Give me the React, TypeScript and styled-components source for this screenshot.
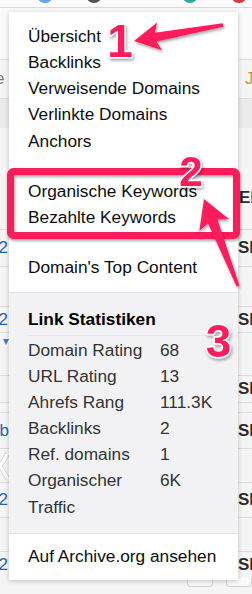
import React from "react";
import styled, { createGlobalStyle } from "styled-components";

const Global = createGlobalStyle`
  html, body { margin: 0; padding: 0; background: #f5f5f5; }
  body { width: 252px; height: 594px; overflow: hidden; font-family: "Liberation Sans", Arial, sans-serif; }
`;

const PINK = "#fd1a5c";

const Page = styled.div`
  position: relative;
  width: 252px;
  height: 594px;
  overflow: hidden;
  background: #f5f5f5;
`;

const Toolbar = styled.div`
  height: 8px;
  box-sizing: border-box;
  border-bottom: 1px solid #d8d8d8;
  background: #fbfbfb;
  display: flex;
  align-items: flex-start;
  overflow: hidden;
`;

const ToolIcon = styled.span<{ $color: string; $ml: number; $ring?: boolean }>`
  flex: none;
  width: 16px;
  height: 16px;
  margin-top: -13px;
  margin-left: ${(p) => p.$ml}px;
  border-radius: 50%;
  box-sizing: border-box;
  background: ${(p) => (p.$ring ? "transparent" : p.$color)};
  border: ${(p) => (p.$ring ? `3px solid ${p.$color}` : "none")};
`;

const Table = styled.div`
  display: flex;
  flex-direction: column;
`;

const Strip = styled.div<{ $h: number; $bg?: string; $border?: boolean }>`
  height: ${(p) => p.$h}px;
  box-sizing: border-box;
  background: ${(p) => p.$bg || "transparent"};
  border-bottom: ${(p) => (p.$border ? "1px solid #dcdcdc" : "none")};
  display: grid;
  grid-template-columns: 1fr 14px;
  align-items: center;
  font-size: 17px;
`;

const LeftCell = styled.div<{ $shift: number; $tone: "blue" | "gray" }>`
  margin-left: ${(p) => p.$shift}px;
  white-space: nowrap;
  color: ${(p) => (p.$tone === "blue" ? "#2565b3" : "#7a7a7a")};
  line-height: 20px;
`;

const RightCell = styled.div<{ $pad?: number; $tone: "bold" | "gold" }>`
  padding-left: ${(p) => p.$pad || 0}px;
  white-space: nowrap;
  line-height: 20px;
  font-weight: ${(p) => (p.$tone === "bold" ? 700 : 400)};
  color: ${(p) => (p.$tone === "bold" ? "#2b2b2b" : "#c7932f")};
`;

const BlueCaret = styled.span`
  display: block;
  width: 0;
  height: 0;
  margin-left: 3px;
  border-left: 3px solid transparent;
  border-right: 3px solid transparent;
  border-top: 6px solid #4a78c2;
`;

const Chevron = styled.svg`
  display: block;
  width: 10px;
  height: 28px;
`;

const ButtonRow = styled.div`
  display: flex;
  align-items: flex-start;
  height: 16px;
  padding-left: 187px;
  gap: 13px;
`;

const GhostButton = styled.span<{ $w: number }>`
  width: ${(p) => p.$w}px;
  height: 9px;
  box-sizing: border-box;
  border: 1px solid #cfcfcf;
  border-top: none;
  border-radius: 0 0 4px 4px;
  background: #fafafa;
`;

const Menu = styled.div`
  position: absolute;
  top: 12px;
  left: 9px;
  width: 229px;
  height: 568px;
  box-sizing: border-box;
  background: #ffffff;
  box-shadow: 0 1px 5px rgba(0, 0, 0, 0.22);
  padding: 10.7px 0 0;
  font-family: "Liberation Sans", Arial, sans-serif;
  font-size: 17.3px;
`;

const Item = styled.div<{ $gapTop?: number }>`
  height: 26.25px;
  line-height: 26.25px;
  padding: 0 19px;
  margin-top: ${(p) => p.$gapTop || 0}px;
  color: #0d0d0d;
  white-space: nowrap;
`;

const Stats = styled.div`
  margin-top: 11.15px;
  border-top: 1px solid #e4e4e8;
  border-bottom: 1px solid #e4e4e8;
  background: #f2f2f5;
  padding: 13.3px 19px 13.3px;
`;

const StatsTitle = styled.div`
  height: 26px;
  line-height: 26px;
  font-weight: 700;
  color: #000;
  padding-bottom: 3.5px;
  border-bottom: 1px solid #e6e6ea;
`;

const StatsGrid = styled.div`
  display: grid;
  grid-template-columns: 132px 1fr;
  line-height: 26.1px;
  color: #333333;
  padding-top: 0.5px;
`;

const StatLabel = styled.div``;
const StatValue = styled.div``;

const Overlay = styled.svg`
  position: absolute;
  left: 0;
  top: 0;
  width: 252px;
  height: 594px;
  pointer-events: none;
`;

const NumText = styled.text`
  font-family: "Liberation Sans", Arial, sans-serif;
  font-weight: 700;
  fill: ${PINK};
  stroke: #ffffff;
  stroke-width: 3px;
  paint-order: stroke;
  stroke-linejoin: round;
`;

type StripDef = {
  h: number;
  bg?: string;
  border?: boolean;
  left?: React.ReactNode;
  leftShift?: number;
  leftTone?: "blue" | "gray";
  right?: string;
  rightTone?: "bold" | "gold";
  rightPad?: number;
};

const strips: StripDef[] = [
  { h: 52, bg: "#fafafa", border: true },
  { h: 39, border: true, left: "e", leftShift: -5, leftTone: "gray", right: "J", rightTone: "gold", rightPad: 7 },
  { h: 29, bg: "#ebebeb" },
  { h: 52 },
  { h: 36, right: "El", rightTone: "bold", rightPad: 1 },
  { h: 14, border: true },
  { h: 37, border: true, left: "72", leftShift: -11, leftTone: "blue", right: "SE", rightTone: "bold" },
  { h: 40, border: true },
  { h: 26, border: true, left: "72", leftShift: -11, leftTone: "blue", right: "SE", rightTone: "bold" },
  { h: 17, left: <BlueCaret />, leftShift: 0, leftTone: "blue" },
  { h: 26, border: true },
  { h: 27, border: true, right: "SE", rightTone: "bold" },
  { h: 10, border: true },
  { h: 36, border: true, left: "eb", leftShift: -10, leftTone: "blue", right: "SE", rightTone: "bold" },
  {
    h: 34,
    border: true,
    left: (
      <Chevron viewBox="0 0 10 28">
        <polyline points="9,1 1,14 9,27" fill="none" stroke="#d8d8d8" strokeWidth="5" strokeLinejoin="round" />
        <polyline points="9,1 1,14 9,27" fill="none" stroke="#ffffff" strokeWidth="3" strokeLinejoin="round" />
      </Chevron>
    ),
    leftShift: -1,
    leftTone: "gray",
  },
  { h: 35, border: true, left: "72", leftShift: -11, leftTone: "blue", right: "SE", rightTone: "bold" },
  { h: 34, border: true },
  { h: 26, left: "72", leftShift: -11, leftTone: "blue", right: "SE", rightTone: "bold" },
];

const menuGroupOne = ["Übersicht", "Backlinks", "Verweisende Domains", "Verlinkte Domains", "Anchors"];
const stats: [string, string][] = [
  ["Domain Rating", "68"],
  ["URL Rating", "13"],
  ["Ahrefs Rang", "111.3K"],
  ["Backlinks", "2"],
  ["Ref. domains", "1"],
  ["Organischer Traffic", "6K"],
];

function Annotations() {
  return (
    <Overlay viewBox="0 0 252 594">
      <defs>
        <filter id="sh" x="-20%" y="-20%" width="140%" height="140%">
          <feDropShadow dx="1" dy="2" stdDeviation="1.4" floodColor="#000" floodOpacity="0.35" />
        </filter>
      </defs>
      <rect x="10.5" y="171.5" width="226" height="64" rx="3" fill="none" stroke={PINK} strokeWidth="7" filter="url(#sh)" />
      <polygon
        points="134,41 157.1,22.6 154.9,32.7 222.7,23.2 223.3,26.8 156.5,41.5 162.1,50.2"
        fill={PINK}
        filter="url(#sh)"
      />
      <polygon
        points="204,199 229.1,219.3 217.4,219.6 239.4,285.5 236.6,286.5 208,223.2 199.3,230.9"
        fill={PINK}
        filter="url(#sh)"
      />
      <NumText x="120" y="57" fontSize="46" textAnchor="middle" filter="url(#sh)">1</NumText>
      <NumText x="191" y="186" fontSize="42" textAnchor="middle" filter="url(#sh)">2</NumText>
      <NumText x="218.5" y="357" fontSize="46" textAnchor="middle" filter="url(#sh)">3</NumText>
    </Overlay>
  );
}

export default function App() {
  return (
    <Page>
      <Global />
      <Toolbar>
        <ToolIcon $color="#333" $ml={-14} />
        <ToolIcon $color="#5fa3e8" $ml={35} />
        <ToolIcon $color="#555" $ml={33} />
        <ToolIcon $color="#2fa7a0" $ml={80} $ring />
        <ToolIcon $color="#d8363b" $ml={33} />
      </Toolbar>
      <Table>
        {strips.map((s, i) => (
          <Strip key={i} $h={s.h} $bg={s.bg} $border={s.border}>
            <LeftCell $shift={s.leftShift ?? 0} $tone={s.leftTone || "blue"}>
              {s.left}
            </LeftCell>
            <RightCell $tone={s.rightTone || "bold"} $pad={s.rightPad}>
              {s.right}
            </RightCell>
          </Strip>
        ))}
        <ButtonRow>
          <GhostButton $w={29} />
          <GhostButton $w={30} />
        </ButtonRow>
      </Table>

      <Menu>
        {menuGroupOne.map((t) => (
          <Item key={t}>{t}</Item>
        ))}
        <Item $gapTop={23.75}>Organische Keywords</Item>
        <Item>Bezahlte Keywords</Item>
        <Item $gapTop={24.1}>Domain's Top Content</Item>
        <Stats>
          <StatsTitle>Link Statistiken</StatsTitle>
          <StatsGrid>
            {stats.map(([l, v]) => (
              <React.Fragment key={l}>
                <StatLabel>{l}</StatLabel>
                <StatValue>{v}</StatValue>
              </React.Fragment>
            ))}
          </StatsGrid>
        </Stats>
        <Item $gapTop={8.7}>Auf Archive.org ansehen</Item>
      </Menu>

      <Annotations />
    </Page>
  );
}
